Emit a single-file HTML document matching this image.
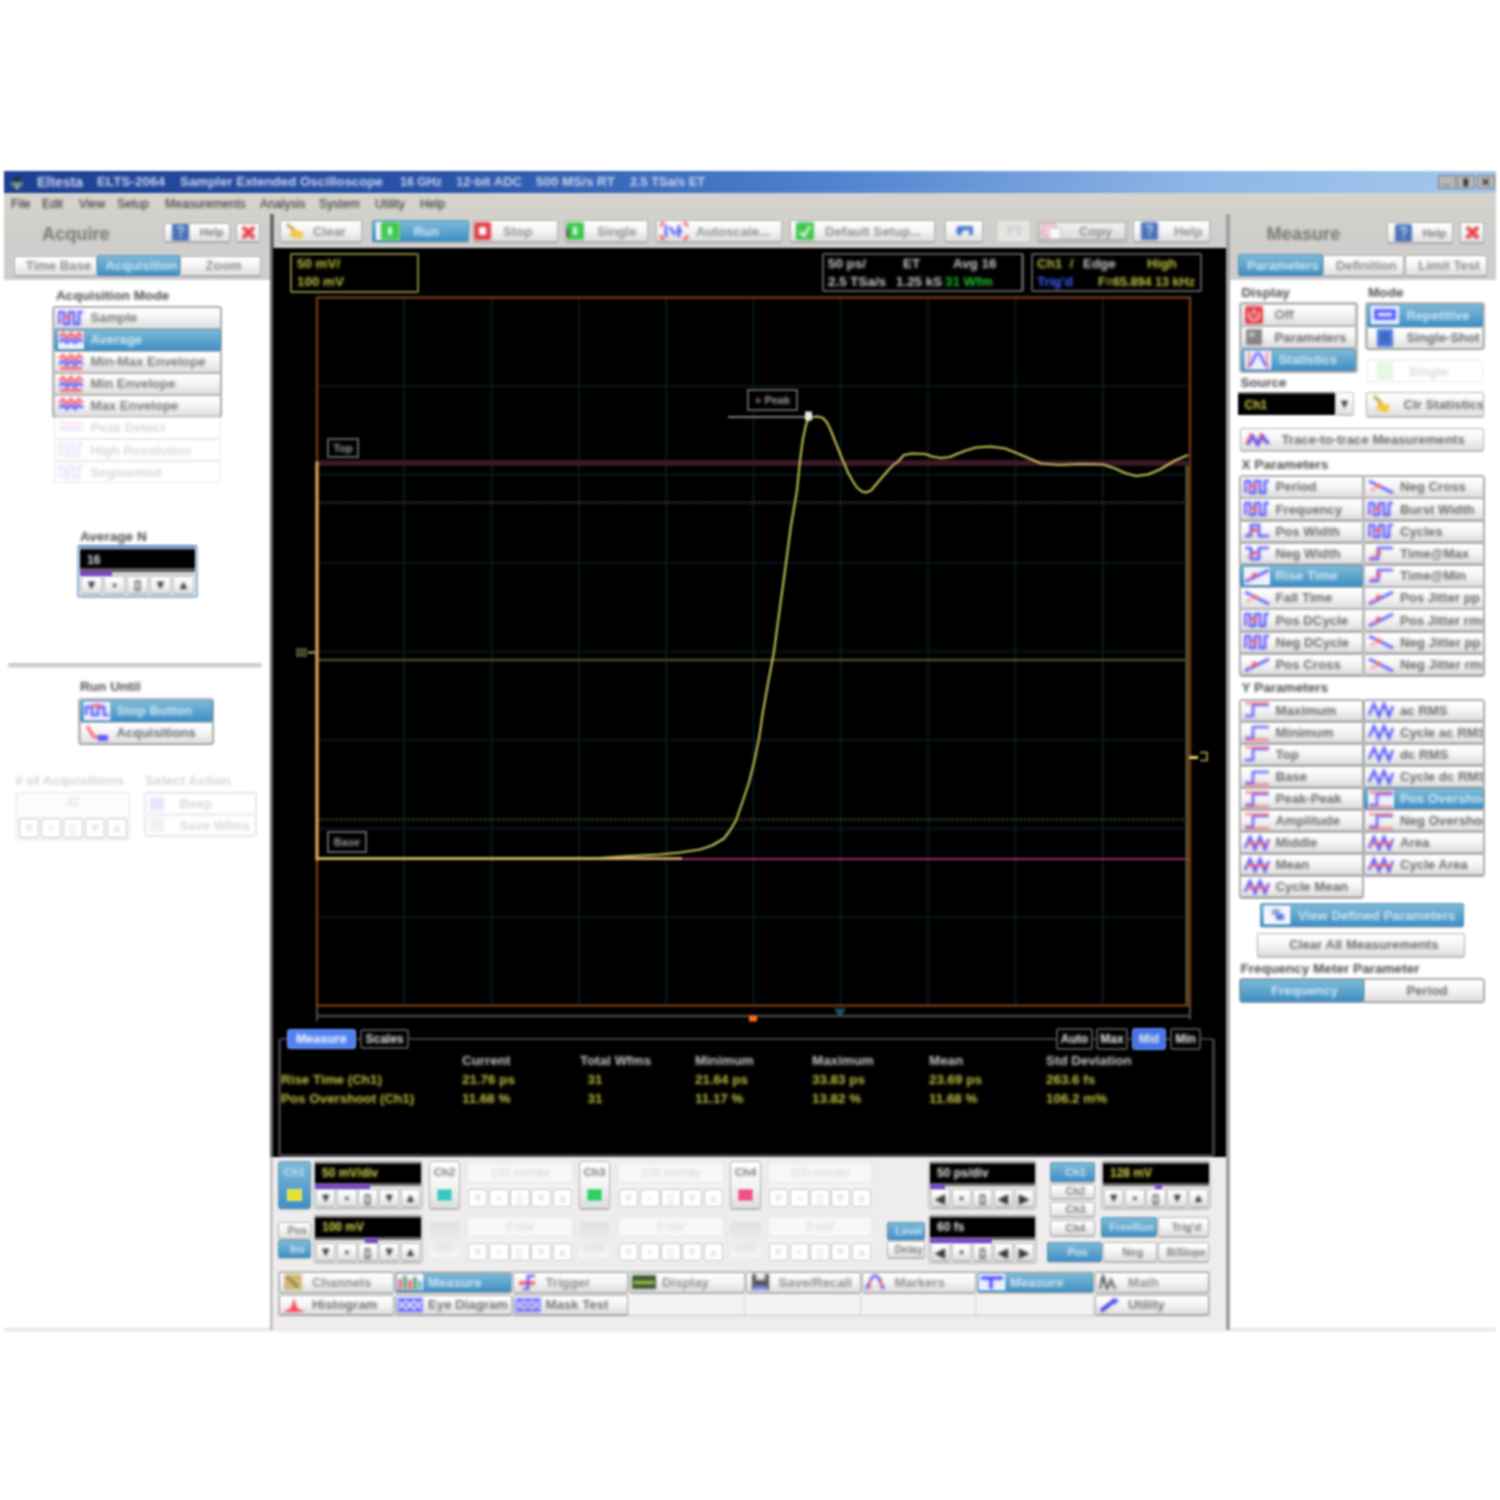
<!DOCTYPE html>
<html lang="en"><head><meta charset="utf-8"><title>Sampler Extended Oscilloscope</title>
<style>
html,body{margin:0;padding:0;background:#fff;}
body{width:1500px;height:1500px;overflow:hidden;position:relative;font-family:"Liberation Sans",sans-serif;font-size:12px;color:#555;}
#w{position:absolute;left:0;top:0;width:1500px;height:1500px;filter:blur(0.9px);}
.t,.lb,.mn,.st,.ttl,.ic,.tx{filter:blur(0.95px);}
.tx{display:inline-block;}
#w div{position:absolute;box-sizing:border-box;white-space:nowrap;}
.b{display:flex;align-items:center;border:1px solid #b4b4b4;border-radius:2px;background:linear-gradient(#ffffff 0%,#f6f6f6 45%,#dedede 100%);color:#787878;font-size:13.2px;font-weight:bold;overflow:hidden;box-shadow:0 1px 1px rgba(120,120,120,.45);}
.b .t{position:static;padding-left:6px;}
.b .ico{display:inline-flex;align-items:center;margin-left:3px;flex:none;}
.b.sel{background:linear-gradient(#7db9d6 0%,#5fa5cd 50%,#3f8ec6 100%);color:#d6ecf8;border-color:#5b97bb;}
.b.dis{background:#fff;color:#d9d9d9;border-color:#e9e9e9;box-shadow:none;}
.b.dis .ic{opacity:.12;}
.ic{opacity:.85;}
.b.sel .ico{background:#eef1fb;}
.b.tb{color:#8e8e8e;}
.b.tab{color:#8a8a8a;}
.b.dk{color:#686868;}
.b.bt{color:#8e8e8e;border-color:#a9a9a9;}
.b.bt .ico{margin-left:1px;}
.b.b2{color:#707070;}
.b.sel,.b.tb.sel,.b.tab.sel,.b.bt.sel{color:#cfe8f6;}
.b.i0 .ico{margin-left:0;}
.b.tb.dis{background:#e4e4e0;border-color:#d4d4d0;}
.b.foc{outline:1px dotted #555;outline-offset:-3px;background:linear-gradient(#f4f4f4,#d8d8d8);}
.b.hp .ico{margin-left:7px;}
.b.sp{font-size:12.5px;color:#333;padding:0;border-color:#c4c4c4;}
.b.sp .t{padding:0;}
.b.sp.dis{color:#e2e2e2;}
.lb{font-weight:bold;color:#4a4a4a;font-size:13.6px;line-height:14px;}
.lb.dis{color:#d4d4d4;}
.ttl{font-weight:bold;color:#767676;font-size:18.2px;line-height:20px;}
.mn{color:#262626;font-size:12.2px;line-height:14px;}
.blk{background:#000;}
.disp{border-top:2px solid #6e6b6e;background:#000;color:#d8d850;font-size:12px;font-weight:bold;line-height:20px;padding-left:7px;}
.grp{border:1px solid #b0b0b0;border-radius:3px;background:#ececec;}
.y{color:#c0c044;} .wt{color:#c8c8c8;} .gn{color:#22c030;} .bl{color:#4060ff;}
.st{font-size:13.4px;font-weight:bold;line-height:14px;}
svg{display:block;}
</style></head><body><div id="w">

<div class="" style="left:4px;top:171px;width:1492px;height:1160px;background:#fff;"></div>
<div class="" style="left:4px;top:192px;width:1492px;height:88px;background:linear-gradient(#d5d5cd,#d0cfcb 40%,#cfcdce);"></div>
<div class="" style="left:4px;top:171px;width:1492px;height:22px;background:linear-gradient(90deg,#1d3f93 0%,#2a54aa 30%,#4f82cf 55%,#8fb6e6 80%,#a4c8ee 100%);"></div>
<div class="" style="left:9px;top:174px;width:16px;height:16px;"><svg class="ic" width="16" height="16" viewBox="0 0 16 16"><path d="M8 1 L12 7 H4 Z" fill="#1a2a10"/><rect x="2" y="8" width="12" height="4" fill="#8a9a70"/><rect x="6" y="11" width="4" height="4" fill="#c0c8b0"/></svg></div>
<div class="lb" style="left:37px;top:175px;color:#cfd9f0;font-size:14.03px;">Eltesta</div>
<div class="lb" style="left:97px;top:175px;color:#cfd9f0;font-size:13.5px;">ELTS-2064</div>
<div class="lb" style="left:180px;top:175px;color:#cfd9f0;font-size:13.33px;">Sampler Extended Oscilloscope</div>
<div class="lb" style="left:400px;top:175px;color:#cfd9f0;font-size:12.39px;">16 GHz</div>
<div class="lb" style="left:456px;top:175px;color:#cfd9f0;font-size:13.01px;">12-bit ADC</div>
<div class="lb" style="left:536px;top:175px;color:#cfd9f0;font-size:13.41px;">500 MS/s RT</div>
<div class="lb" style="left:630px;top:175px;color:#cfd9f0;font-size:12.73px;">2.5 TSa/s ET</div>
<div class="" style="left:1437.5px;top:174.5px;width:18px;height:14.5px;background:#b6b6b6;border:1px solid #808080;color:#111;font-size:12px;font-weight:bold;line-height:8px;text-align:center;"><span class="tx">_</span></div>
<div class="" style="left:1456.5px;top:174.5px;width:18px;height:14.5px;background:#b6b6b6;border:1px solid #808080;color:#222;font-size:10px;font-weight:bold;line-height:12px;text-align:center;"><span class="tx">▮</span></div>
<div class="" style="left:1476.5px;top:174.5px;width:18px;height:14.5px;background:#b6b6b6;border:1px solid #808080;color:#222;font-size:11px;font-weight:bold;line-height:12px;text-align:center;"><span class="tx">✕</span></div>
<div class="mn" style="left:11px;top:197px;">File</div>
<div class="mn" style="left:42px;top:197px;">Edit</div>
<div class="mn" style="left:79px;top:197px;">View</div>
<div class="mn" style="left:117px;top:197px;">Setup</div>
<div class="mn" style="left:165px;top:197px;">Measurements</div>
<div class="mn" style="left:260px;top:197px;">Analysis</div>
<div class="mn" style="left:319px;top:197px;">System</div>
<div class="mn" style="left:375px;top:197px;">Utility</div>
<div class="mn" style="left:420px;top:197px;">Help</div>
<div class="" style="left:4px;top:1328px;width:1492px;height:4px;background:linear-gradient(#e2e2e2,#f4f4f4);"></div>
<div class="ttl" style="left:42px;top:224px;">Acquire</div>
<div class="b hp" style="left:164px;top:222.5px;width:66px;height:19.5px;font-size:11px;"><span class="ico"><svg class="ic" width="17" height="18" viewBox="0 0 17 18"><rect x="0" y="0" width="17" height="18" rx="1.5" fill="#2e5cae"/><path d="M6 6 Q6 3.5 8.5 3.5 T11 6 Q11 8 8.5 9.5 V11" stroke="#a8c4f0" stroke-width="2" fill="none"/><rect x="7.5" y="12.5" width="2" height="2.2" fill="#a8c4f0"/></svg></span><span class="t" style="padding-left:11px">Help</span></div>
<div class="b" style="left:236px;top:222.5px;width:23.5px;height:19.5px;"><span class="ico"><svg class="ic" width="17" height="15" viewBox="0 0 17 15"><path d="M3 2 L14 13 M14 2 L3 13" stroke="#e8202c" stroke-width="4"/></svg></span></div>
<div class="b tab" style="left:14px;top:256px;width:83px;height:19.5px;justify-content:center;"><span class="t">Time Base</span></div>
<div class="b sel tab" style="left:97px;top:255px;width:83px;height:21px;justify-content:center;"><span class="t">Acquisition</span></div>
<div class="b tab" style="left:180px;top:256px;width:81px;height:19.5px;justify-content:center;"><span class="t">Zoom</span></div>
<div class="lb" style="left:56px;top:289px;">Acquisition Mode</div>
<div class="grp" style="left:52px;top:306px;width:170px;height:112px;background:#d0d0d0;border-color:#a8a8a8;"></div>
<div class="b" style="left:53.5px;top:307px;width:167px;height:21.6px;"><span class="ico"><svg class="ic" width="26" height="18" viewBox="0 0 26 18"><path d="M1 15 V3 H6 V15 H11 V3 H16 V15 H21 V3 H25" fill="none" stroke="#3b3bff" stroke-width="2.6"/><rect x="8" y="6" width="5" height="4" fill="#ff4050"/><rect x="3" y="10" width="4" height="3" fill="#ff7080" opacity=".8"/></svg></span><span class="t" style="padding-left:7px">Sample</span></div>
<div class="b sel" style="left:53.5px;top:329.1px;width:167px;height:21.6px;"><span class="ico"><svg class="ic" width="26" height="18" viewBox="0 0 26 18"><path d="M1 6 L5 2 L9 7 L13 2 L17 7 L21 2 L25 6" fill="none" stroke="#ff3040" stroke-width="2.4"/><path d="M1 11 L5 8 L9 12 L13 8 L17 12 L21 8 L25 11" fill="none" stroke="#3b3bff" stroke-width="2.6"/></svg></span><span class="t" style="padding-left:7px">Average</span></div>
<div class="b" style="left:53.5px;top:351.1px;width:167px;height:21.6px;"><span class="ico"><svg class="ic" width="26" height="18" viewBox="0 0 26 18"><path d="M1 6 L5 2 L9 7 L13 2 L17 7 L21 2 L25 6" fill="none" stroke="#ff3040" stroke-width="2.4"/><path d="M1 11 L5 8 L9 12 L13 8 L17 12 L21 8 L25 11" fill="none" stroke="#3b3bff" stroke-width="2.6"/><rect x="2" y="14" width="22" height="2.6" fill="#ff3040"/></svg></span><span class="t" style="padding-left:7px">Min-Max Envelope</span></div>
<div class="b" style="left:53.5px;top:373.1px;width:167px;height:21.6px;"><span class="ico"><svg class="ic" width="26" height="18" viewBox="0 0 26 18"><path d="M1 6 L5 2 L9 7 L13 2 L17 7 L21 2 L25 6" fill="none" stroke="#ff3040" stroke-width="2.4"/><path d="M1 11 L5 8 L9 12 L13 8 L17 12 L21 8 L25 11" fill="none" stroke="#3b3bff" stroke-width="2.6"/><rect x="2" y="14" width="22" height="2.6" fill="#ff3040"/></svg></span><span class="t" style="padding-left:7px">Min Envelope</span></div>
<div class="b" style="left:53.5px;top:395.2px;width:167px;height:21.6px;"><span class="ico"><svg class="ic" width="26" height="18" viewBox="0 0 26 18"><path d="M1 6 L5 2 L9 7 L13 2 L17 7 L21 2 L25 6" fill="none" stroke="#ff3040" stroke-width="2.4"/><path d="M1 11 L5 8 L9 12 L13 8 L17 12 L21 8 L25 11" fill="none" stroke="#3b3bff" stroke-width="2.6"/></svg></span><span class="t" style="padding-left:7px">Max Envelope</span></div>
<div class="b dis" style="left:53.5px;top:417.2px;width:167px;height:21.6px;"><span class="ico"><svg class="ic" width="26" height="18" viewBox="0 0 26 18"><path d="M1 6 L5 2 L9 7 L13 2 L17 7 L21 2 L25 6" fill="none" stroke="#ff3040" stroke-width="2.4"/><path d="M1 11 L5 8 L9 12 L13 8 L17 12 L21 8 L25 11" fill="none" stroke="#3b3bff" stroke-width="2.6"/></svg></span><span class="t" style="padding-left:7px">Peak Detect</span></div>
<div class="b dis" style="left:53.5px;top:439.3px;width:167px;height:21.6px;"><span class="ico"><svg class="ic" width="26" height="18" viewBox="0 0 26 18"><path d="M1 15 V3 H6 V15 H11 V3 H16 V15 H21 V3 H25" fill="none" stroke="#3b3bff" stroke-width="2.6"/><rect x="8" y="6" width="5" height="4" fill="#ff4050"/><rect x="3" y="10" width="4" height="3" fill="#ff7080" opacity=".8"/></svg></span><span class="t" style="padding-left:7px">High Resolution</span></div>
<div class="b dis" style="left:53.5px;top:461.4px;width:167px;height:21.6px;"><span class="ico"><svg class="ic" width="26" height="18" viewBox="0 0 26 18"><path d="M1 15 V3 H6 V15 H11 V3 H16 V15 H21 V3 H25" fill="none" stroke="#3b3bff" stroke-width="2.6"/><rect x="8" y="6" width="5" height="4" fill="#ff4050"/><rect x="3" y="10" width="4" height="3" fill="#ff7080" opacity=".8"/></svg></span><span class="t" style="padding-left:7px">Segmented</span></div>
<div class="lb" style="left:80px;top:530px;">Average N</div>
<div class="" style="left:77px;top:545px;width:120.5px;height:53px;background:#e4e4e4;border:2.5px solid #8fb8dc;border-top-color:#4c80b0;border-radius:3px;"></div>
<div class="disp" style="left:80px;top:548px;width:115px;height:20px;color:#e8e8e8;border-top-color:#3c5c80;"><span class="tx">16</span></div>
<div class="" style="left:80px;top:568px;width:115px;height:4px;background:#5c5858;"></div>
<div class="" style="left:80px;top:571.5px;width:115px;height:4px;background:#d6d2d2;"></div>
<div class="" style="left:80px;top:570.5px;width:32px;height:5px;background:#7848c8;"></div>
<div class="b sp" style="left:80.8px;top:575.5px;width:21.4px;height:18px;justify-content:center;"><span class="t">▼</span></div>
<div class="b sp" style="left:103.8px;top:575.5px;width:21.4px;height:18px;justify-content:center;"><span class="t">▪</span></div>
<div class="b sp" style="left:126.8px;top:575.5px;width:21.4px;height:18px;justify-content:center;"><span class="t">▯</span></div>
<div class="b sp" style="left:149.8px;top:575.5px;width:21.4px;height:18px;justify-content:center;"><span class="t">▼</span></div>
<div class="b sp" style="left:172.8px;top:575.5px;width:21.4px;height:18px;justify-content:center;"><span class="t">▲</span></div>
<div class="" style="left:8px;top:663px;width:254px;height:5px;background:linear-gradient(#c4c4c4,#dcdcdc);border-radius:2px;"></div>
<div class="lb" style="left:80px;top:680px;">Run Until</div>
<div class="grp" style="left:78px;top:698px;width:136px;height:46.5px;background:#cfcfcf;border-color:#a8a8a8;"></div>
<div class="b sel" style="left:79.5px;top:699.5px;width:133px;height:22px;"><span class="ico"><svg class="ic" width="26" height="18" viewBox="0 0 26 18"><rect x="0" y="0" width="26" height="18" fill="#eef"/><path d="M2 13 V5 H8 V13 H14 V5 H20 V13 H25" fill="none" stroke="#3b3bff" stroke-width="2.6"/><rect x="8" y="2" width="10" height="3" fill="#ff5060"/></svg></span><span class="t" style="padding-left:7px">Stop Button</span></div>
<div class="b dk" style="left:79.5px;top:722px;width:133px;height:21.5px;"><span class="ico"><svg class="ic" width="26" height="18" viewBox="0 0 26 18"><path d="M3 2 L10 13 H24" fill="none" stroke="#ff3040" stroke-width="2.6"/><rect x="14" y="11" width="10" height="6" fill="#3b3bff"/></svg></span><span class="t" style="padding-left:7px">Acquisitions</span></div>
<div class="lb dis" style="left:15px;top:774px;"># of Acquisitions</div>
<div class="lb dis" style="left:145px;top:774px;">Select Action</div>
<div class="" style="left:16px;top:791.5px;width:114px;height:48.5px;border:1px solid #e4e4e4;border-radius:3px;background:#fcfcfc;"></div>
<div class="" style="left:18px;top:793px;width:110px;height:19px;color:#dcdcdc;font-size:12px;line-height:19px;text-align:center;"><span class="tx">32</span></div>
<div class="b dis sp" style="left:18.8px;top:818px;width:20.4px;height:20px;justify-content:center;"><span class="t">▼</span></div>
<div class="b dis sp" style="left:40.8px;top:818px;width:20.4px;height:20px;justify-content:center;"><span class="t">▪</span></div>
<div class="b dis sp" style="left:62.8px;top:818px;width:20.4px;height:20px;justify-content:center;"><span class="t">▯</span></div>
<div class="b dis sp" style="left:84.8px;top:818px;width:20.4px;height:20px;justify-content:center;"><span class="t">▼</span></div>
<div class="b dis sp" style="left:106.8px;top:818px;width:20.4px;height:20px;justify-content:center;"><span class="t">▲</span></div>
<div class="" style="left:144px;top:791.5px;width:113px;height:45.5px;border:1px solid #e4e4e4;border-radius:3px;background:#fcfcfc;"></div>
<div class="b dis" style="left:145.5px;top:793px;width:110px;height:21px;"><span class="ico"><svg class="ic" width="14" height="14" viewBox="0 0 14 14"><rect x="0" y="0" width="14" height="14" rx="2" fill="#3b3bff"/></svg></span><span class="t" style="padding-left:16px">Beep</span></div>
<div class="b dis" style="left:145.5px;top:815px;width:110px;height:20.5px;"><span class="ico"><svg class="ic" width="14" height="14" viewBox="0 0 14 14"><rect x="0" y="0" width="14" height="14" rx="2" fill="#888"/></svg></span><span class="t" style="padding-left:16px">Save Wfms</span></div>
<div class="" style="left:270px;top:214px;width:4px;height:943px;background:#6a686c;"></div>
<div class="" style="left:270px;top:1157px;width:3.5px;height:173px;background:linear-gradient(90deg,#b4b2b4,#dcdcdc);"></div>
<div class="b tb" style="left:280px;top:220px;width:82px;height:22px;font-size:13.2px;"><span class="ico"><svg class="ic" width="22" height="18" viewBox="0 0 22 18"><path d="M3 2 L12 10" stroke="#b07818" stroke-width="2.5"/><path d="M8 8 L20 10 L17 17 L5 14 Z" fill="#f4c020"/></svg></span><span class="t" style="padding-left:7px">Clear</span></div>
<div class="b sel tb" style="left:371.5px;top:220px;width:97.5px;height:22px;font-size:13.2px;"><span class="ico"><svg class="ic" width="24" height="18" viewBox="0 0 24 18"><rect x="5" y="0" width="19" height="18" rx="2" fill="#22c032"/><rect x="12" y="5" width="4" height="8" fill="#c8ffd0"/></svg></span><span class="t" style="padding-left:14px">Run</span></div>
<div class="b tb i0" style="left:473px;top:220px;width:85px;height:22px;font-size:13.2px;"><span class="ico"><svg class="ic" width="18" height="18" viewBox="0 0 18 18"><rect x="0" y="0" width="17" height="18" rx="2" fill="#e01c24"/><rect x="5" y="5" width="7" height="8" fill="#fff"/></svg></span><span class="t" style="padding-left:11px">Stop</span></div>
<div class="b tb i0" style="left:565px;top:220px;width:83px;height:22px;font-size:13.2px;"><span class="ico"><svg class="ic" width="20" height="18" viewBox="0 0 20 18"><rect x="0" y="0" width="18" height="18" rx="2" fill="#22c032"/><rect x="7" y="5" width="4" height="8" fill="#c8ffd0"/><rect x="0" y="7" width="3" height="8" fill="#333"/></svg></span><span class="t" style="padding-left:11px">Single</span></div>
<div class="b tb" style="left:656px;top:220px;width:126px;height:22px;font-size:13.2px;"><span class="ico"><svg class="ic" width="28" height="18" viewBox="0 0 28 18"><path d="M6 3 V15 M10 5 L15 13 M19 3 V15 M16 9 H22" stroke="#3b3bff" stroke-width="2.6" fill="none"/><path d="M1 1 h4 M1 1 v4 M27 1 h-4 M27 1 v4 M1 17 h4 M1 17 v-4 M27 17 h-4 M27 17 v-4" stroke="#ff3040" stroke-width="2.4"/></svg></span><span class="t" style="padding-left:8px">Autoscale...</span></div>
<div class="b tb" style="left:790px;top:220px;width:145px;height:22px;font-size:13.2px;"><span class="ico"><svg class="ic" width="22" height="18" viewBox="0 0 22 18"><rect x="2" y="0" width="18" height="18" rx="2" fill="#22c032"/><path d="M6 10 L10 14 L16 4" stroke="#e8ffe8" stroke-width="2.4" fill="none"/></svg></span><span class="t" style="padding-left:9px">Default Setup...</span></div>
<div class="b" style="left:945px;top:220px;width:38px;height:22px;"><span class="ico"><svg class="ic" width="30" height="18" viewBox="0 0 30 18"><path d="M10 13 V6 H22 V13" stroke="#2f62c8" stroke-width="4" fill="none"/><path d="M6 8 L11 14 L15 8" fill="#2f62c8"/></svg></span></div>
<div class="b dis tb" style="left:997px;top:220px;width:33px;height:22px;"><span class="ico"><svg class="ic" width="26" height="18" viewBox="0 0 26 18"><path d="M8 13 V6 H18 V13" stroke="#2f62c8" stroke-width="4" fill="none"/></svg></span></div>
<div class="b tb foc" style="left:1037px;top:220px;width:91px;height:22px;font-size:13.2px;"><span class="ico"><svg class="ic" width="24" height="18" viewBox="0 0 24 18"><rect x="2" y="2" width="12" height="12" fill="#f8d0d8" stroke="#e06080"/><rect x="8" y="6" width="12" height="11" fill="#fff" stroke="#b0b0b0"/></svg></span><span class="t" style="padding-left:14px">Copy</span></div>
<div class="b tb hp" style="left:1133px;top:220px;width:77px;height:22px;font-size:13.2px;"><span class="ico"><svg class="ic" width="17" height="18" viewBox="0 0 17 18"><rect x="0" y="0" width="17" height="18" rx="1.5" fill="#2e5cae"/><path d="M6 6 Q6 3.5 8.5 3.5 T11 6 Q11 8 8.5 9.5 V11" stroke="#a8c4f0" stroke-width="2" fill="none"/><rect x="7.5" y="12.5" width="2" height="2.2" fill="#a8c4f0"/></svg></span><span class="t" style="padding-left:16px">Help</span></div>
<div class="blk" style="left:273px;top:247.5px;width:953.5px;height:909.1px;"></div>
<div style="left:273px;top:247.5px;width:953.5px;height:909.1px;"><svg width="953.5" height="909.1" viewBox="0 0 953.5 909.1" style="position:absolute;left:0;top:0"><path d="M131.3 49.5 V757.5 M218.6 49.5 V757.5 M305.9 49.5 V757.5 M393.2 49.5 V757.5 M480.5 49.5 V757.5 M567.8 49.5 V757.5 M655.1 49.5 V757.5 M742.4 49.5 V757.5 M829.7 49.5 V757.5 M44 138 H917 M44 226.5 H917 M44 315 H917 M44 403.5 H917 M44 492 H917 M44 580.5 H917 M44 669 H917 " stroke="#07181a" stroke-width="2.2" fill="none"/><rect x="44" y="49.5" width="873" height="708" fill="none" stroke="#743a16" stroke-width="2.4"/><path d="M914 214.5 V756.5" stroke="#5e5630" stroke-width="3"/><path d="M44 215 H917" stroke="#3c1a28" stroke-width="5.5"/><path d="M44 611 H917" stroke="#982c6a" stroke-width="2.2"/><path d="M44 412 H913" stroke="#4e4e22" stroke-width="2.6"/><path d="M44 254.5 H913" stroke="#2e321e" stroke-width="2.6" stroke-dasharray="3 1.5"/><path d="M44 571.5 H913" stroke="#26291a" stroke-width="3.2" stroke-dasharray="3 1.5"/><path d="M44 213.5 V612.5" stroke="#dc9a52" stroke-width="3.4"/><path d="M44 610.5 H409" stroke="#dcb478" stroke-width="2.4"/><path d="M44 768 H917 M44 757.5 V773.5 M917 757.5 V771.5" stroke="#464646" stroke-width="2.3" fill="none"/><rect x="476" y="767.5" width="8" height="6" fill="#ff6a18"/><path d="M561 760.5 h12 l-6 10 z" fill="#1e5060"/><path d="M44 610.5 L287 610.5 L327 610.1 L357 608 L387 606.5 L407 604.5 L427 601.5 L439 597.5 L451 590.5 L457 582.5 L463 572.5 L470 552.5 L476 534.5 L481 514.5 L486 490.5 L490 463.5 L495 435.5 L501 403.5 L506.5 362.5 L512 322.5 L518 277.5 L524 242.5 L527 212.5 L530 190.5 L533 176.5 L536 170.5 L539 169 L545 168.5 L550 170 L554 174.5 L557 180.5 L561 190.5 L565 200.5 L569 210.5 L575 224.5 L580 233.5 L584 239.5 L589 243.5 L593 244.5 L598 242.5 L603 236.5 L609 229.5 L615 222.5 L621 216.5 L625 213.5 L631 207 L639 205.5 L652 206 L659 208.5 L668 210 L677 209 L685 205.5 L693 202.5 L703 199.5 L717 198.5 L732 200.5 L747 206.5 L768 215.5 L787 217 L807 216 L830 216.5 L842 220.5 L852 225 L863 228 L875 226.5 L887 221.5 L902 212.5 L915 207" fill="none" stroke="#c2c256" stroke-width="2.1" stroke-linejoin="round"/><path d="M455 169 H533" stroke="#7a7a7a" stroke-width="2.2"/><rect x="532" y="163.5" width="7" height="9" fill="#e8e8e8"/><rect x="23" y="400" width="11" height="9" fill="#505034"/><path d="M35 404.5 h7" stroke="#a0a060" stroke-width="2.2" fill="none"/><path d="M916 509.5 h9" stroke="#e0d060" stroke-width="3"/><path d="M927 504.5 h7 v8 h-7" stroke="#8c8440" stroke-width="2" fill="none"/></svg></div>
<div class="" style="left:290px;top:253px;width:129px;height:39.5px;border:2px solid #808040;border-radius:2px;"></div>
<div class="st y" style="left:297px;top:257px;">50 mV/</div>
<div class="st y" style="left:297px;top:275px;">100 mV</div>
<div class="" style="left:822px;top:253px;width:202px;height:39px;border:2px solid #585858;border-right-width:3px;border-radius:2px;"></div>
<div class="st wt" style="left:828px;top:257px;">50 ps/</div>
<div class="st wt" style="left:903px;top:257px;">ET</div>
<div class="st wt" style="left:953px;top:257px;">Avg 16</div>
<div class="st wt" style="left:828px;top:275px;">2.5 TSa/s</div>
<div class="st wt" style="left:896px;top:275px;">1.25 kS</div>
<div class="st gn" style="left:945px;top:275px;">31 Wfm</div>
<div class="" style="left:1031px;top:253px;width:171px;height:39px;border:2px solid #585858;border-radius:2px;"></div>
<div class="st y" style="left:1037px;top:257px;">Ch1 &nbsp;/</div>
<div class="st wt" style="left:1083px;top:257px;">Edge</div>
<div class="st y" style="left:1147px;top:257px;">High</div>
<div class="st bl" style="left:1037px;top:275px;">Trig'd</div>
<div class="st y" style="left:1098px;top:275px;font-size:12.6px;">F=65.894 13 kHz</div>
<div class="" style="left:327px;top:438px;width:32px;height:20px;border:2px solid #5e5e5e;color:#9c9c9c;font-size:11px;font-weight:bold;line-height:16px;text-align:center;background:#000;"><span class="tx">Top</span></div>
<div class="" style="left:327px;top:831px;width:40px;height:22px;border:2px solid #5e5e5e;color:#9c9c9c;font-size:11px;font-weight:bold;line-height:18px;text-align:center;background:#000;"><span class="tx">Base</span></div>
<div class="" style="left:747px;top:388.5px;width:51px;height:22px;border:2px solid #5e5e5e;color:#9c9c9c;font-size:11px;font-weight:bold;line-height:18px;text-align:center;background:#000;"><span class="tx">+ Peak</span></div>
<div class="st y" style="left:297px;top:645.5px;font-size:8px;color:#2c2c18;">C1</div>
<div class="" style="left:277.5px;top:1037.5px;width:937.5px;height:119px;border:3px solid #3f3c43;border-top-width:2px;border-radius:3px;"></div>
<div class="" style="left:286.5px;top:1029px;width:69.5px;height:19.5px;background:#4f80f0;border:1px solid #7aa0f8;border-radius:3px;color:#fff;font-weight:bold;font-size:12.5px;line-height:18px;text-align:center;"><span class="tx">Measure</span></div>
<div class="" style="left:360px;top:1029px;width:49px;height:19.5px;background:#000;border:2px solid #4c4c4c;border-radius:3px;color:#e4e4e4;font-weight:bold;font-size:12px;line-height:16px;text-align:center;"><span class="tx">Scales</span></div>
<div class="" style="left:1056px;top:1028px;width:37px;height:22px;background:#000;border:2px solid #4c4c4c;border-radius:3px;color:#eee;font-weight:bold;font-size:12px;line-height:18px;text-align:center;"><span class="tx">Auto</span></div>
<div class="" style="left:1096px;top:1028px;width:32px;height:22px;background:#000;border:2px solid #4c4c4c;border-radius:3px;color:#eee;font-weight:bold;font-size:12px;line-height:18px;text-align:center;"><span class="tx">Max</span></div>
<div class="" style="left:1132px;top:1028px;width:34px;height:22px;background:#4474e4;border:1px solid #6a94f0;border-radius:3px;color:#eee;font-weight:bold;font-size:12px;line-height:20px;text-align:center;"><span class="tx">Mid</span></div>
<div class="" style="left:1170px;top:1028px;width:31px;height:22px;background:#000;border:2px solid #4c4c4c;border-radius:3px;color:#eee;font-weight:bold;font-size:12px;line-height:18px;text-align:center;"><span class="tx">Min</span></div>
<div class="st wt" style="left:462px;top:1054px;">Current</div>
<div class="st wt" style="left:580px;top:1054px;">Total Wfms</div>
<div class="st wt" style="left:695px;top:1054px;">Minimum</div>
<div class="st wt" style="left:812px;top:1054px;">Maximum</div>
<div class="st wt" style="left:929px;top:1054px;">Mean</div>
<div class="st wt" style="left:1046px;top:1054px;">Std Deviation</div>
<div class="st y" style="left:281px;top:1073px;">Rise Time (Ch1)</div>
<div class="st y" style="left:281px;top:1091.5px;">Pos Overshoot (Ch1)</div>
<div class="st y" style="left:462px;top:1073px;">21.76 ps</div>
<div class="st y" style="left:462px;top:1091.5px;">11.68 %</div>
<div class="st y" style="left:580px;top:1073px;">&nbsp;&nbsp;31</div>
<div class="st y" style="left:580px;top:1091.5px;">&nbsp;&nbsp;31</div>
<div class="st y" style="left:695px;top:1073px;">21.64 ps</div>
<div class="st y" style="left:695px;top:1091.5px;">11.17 %</div>
<div class="st y" style="left:812px;top:1073px;">33.83 ps</div>
<div class="st y" style="left:812px;top:1091.5px;">13.82 %</div>
<div class="st y" style="left:929px;top:1073px;">23.69 ps</div>
<div class="st y" style="left:929px;top:1091.5px;">11.68 %</div>
<div class="st y" style="left:1046px;top:1073px;">263.6 fs</div>
<div class="st y" style="left:1046px;top:1091.5px;">106.2 m%</div>
<div class="" style="left:273px;top:1156.6px;width:953.5px;height:173.4px;background:#eeecec;"></div>
<div class="b sel" style="left:277.5px;top:1160.5px;width:33.5px;height:48px;display:block;border-radius:3px;"><div class="tx" style="left:0;top:4px;width:100%;text-align:center;font-size:11.5px;line-height:13px;color:#bfe0f2">Ch1</div><div style="left:8.2px;top:27px;width:15px;height:12px;background:#e4e030;border:1px solid rgba(255,255,255,.35)"></div></div>
<div class="b" style="left:429px;top:1160.5px;width:31px;height:48px;display:block;border-radius:3px;"><div class="tx" style="left:0;top:4px;width:100%;text-align:center;font-size:11.5px;line-height:13px;color:#777">Ch2</div><div style="left:7px;top:27px;width:15px;height:12px;background:#38c8c0;border:1px solid rgba(255,255,255,.35)"></div></div>
<div class="b" style="left:579px;top:1160.5px;width:31px;height:48px;display:block;border-radius:3px;"><div class="tx" style="left:0;top:4px;width:100%;text-align:center;font-size:11.5px;line-height:13px;color:#777">Ch3</div><div style="left:7px;top:27px;width:15px;height:12px;background:#30d060;border:1px solid rgba(255,255,255,.35)"></div></div>
<div class="b" style="left:730px;top:1160.5px;width:31px;height:48px;display:block;border-radius:3px;"><div class="tx" style="left:0;top:4px;width:100%;text-align:center;font-size:11.5px;line-height:13px;color:#777">Ch4</div><div style="left:7px;top:27px;width:15px;height:12px;background:#f05088;border:1px solid rgba(255,255,255,.35)"></div></div>
<div class="" style="left:313px;top:1160px;width:110px;height:50px;border:1px solid #bcbcbc;border-radius:4px;background:#e0e0e0;"></div>
<div class="disp" style="left:315px;top:1161.5px;width:106px;height:21px;color:#d8d850;line-height:19px;"><span class="tx">50 mV/div</span></div>
<div class="" style="left:315px;top:1182.5px;width:106px;height:3px;background:#6a6767;"></div>
<div class="" style="left:315px;top:1184px;width:55px;height:4.5px;background:#7848c8;"></div>
<div class="b sp" style="left:315.8px;top:1189px;width:19.6px;height:18px;justify-content:center;"><span class="t">▼</span></div>
<div class="b sp" style="left:337px;top:1189px;width:19.6px;height:18px;justify-content:center;"><span class="t">▪</span></div>
<div class="b sp" style="left:358.2px;top:1189px;width:19.6px;height:18px;justify-content:center;"><span class="t">▯</span></div>
<div class="b sp" style="left:379.4px;top:1189px;width:19.6px;height:18px;justify-content:center;"><span class="t">▼</span></div>
<div class="b sp" style="left:400.6px;top:1189px;width:19.6px;height:18px;justify-content:center;"><span class="t">▲</span></div>
<div class="" style="left:313px;top:1214px;width:110px;height:50px;border:1px solid #bcbcbc;border-radius:4px;background:#e0e0e0;"></div>
<div class="disp" style="left:315px;top:1215.5px;width:106px;height:21px;color:#d8d850;line-height:19px;"><span class="tx">100 mV</span></div>
<div class="" style="left:315px;top:1236.5px;width:106px;height:3px;background:#6a6767;"></div>
<div class="" style="left:365px;top:1238px;width:13px;height:4.5px;background:#7848c8;"></div>
<div class="b sp" style="left:315.8px;top:1243px;width:19.6px;height:18px;justify-content:center;"><span class="t">▼</span></div>
<div class="b sp" style="left:337px;top:1243px;width:19.6px;height:18px;justify-content:center;"><span class="t">▪</span></div>
<div class="b sp" style="left:358.2px;top:1243px;width:19.6px;height:18px;justify-content:center;"><span class="t">▯</span></div>
<div class="b sp" style="left:379.4px;top:1243px;width:19.6px;height:18px;justify-content:center;"><span class="t">▼</span></div>
<div class="b sp" style="left:400.6px;top:1243px;width:19.6px;height:18px;justify-content:center;"><span class="t">▲</span></div>
<div class="" style="left:465px;top:1160px;width:110px;height:50px;border:1px solid #e8e8e8;border-radius:4px;background:#f3f2f2;"></div>
<div class="" style="left:467px;top:1162.5px;width:106px;height:20.5px;background:#f8f8f8;border:1px solid #e6e6e6;color:#d6d6d6;font-size:12px;line-height:19px;text-align:center;"><span class="tx">100 mV/div</span></div>
<div class="b dis sp" style="left:467.8px;top:1189px;width:19.6px;height:18px;justify-content:center;"><span class="t">▼</span></div>
<div class="b dis sp" style="left:489px;top:1189px;width:19.6px;height:18px;justify-content:center;"><span class="t">▪</span></div>
<div class="b dis sp" style="left:510.2px;top:1189px;width:19.6px;height:18px;justify-content:center;"><span class="t">▯</span></div>
<div class="b dis sp" style="left:531.4px;top:1189px;width:19.6px;height:18px;justify-content:center;"><span class="t">▼</span></div>
<div class="b dis sp" style="left:552.6px;top:1189px;width:19.6px;height:18px;justify-content:center;"><span class="t">▲</span></div>
<div class="" style="left:465px;top:1214px;width:110px;height:50px;border:1px solid #e8e8e8;border-radius:4px;background:#f3f2f2;"></div>
<div class="" style="left:467px;top:1216.5px;width:106px;height:20.5px;background:#f8f8f8;border:1px solid #e6e6e6;color:#d6d6d6;font-size:12px;line-height:19px;text-align:center;"><span class="tx">0 mV</span></div>
<div class="b dis sp" style="left:467.8px;top:1243px;width:19.6px;height:18px;justify-content:center;"><span class="t">▼</span></div>
<div class="b dis sp" style="left:489px;top:1243px;width:19.6px;height:18px;justify-content:center;"><span class="t">▪</span></div>
<div class="b dis sp" style="left:510.2px;top:1243px;width:19.6px;height:18px;justify-content:center;"><span class="t">▯</span></div>
<div class="b dis sp" style="left:531.4px;top:1243px;width:19.6px;height:18px;justify-content:center;"><span class="t">▼</span></div>
<div class="b dis sp" style="left:552.6px;top:1243px;width:19.6px;height:18px;justify-content:center;"><span class="t">▲</span></div>
<div class="" style="left:616px;top:1160px;width:110px;height:50px;border:1px solid #e8e8e8;border-radius:4px;background:#f3f2f2;"></div>
<div class="" style="left:618px;top:1162.5px;width:106px;height:20.5px;background:#f8f8f8;border:1px solid #e6e6e6;color:#d6d6d6;font-size:12px;line-height:19px;text-align:center;"><span class="tx">100 mV/div</span></div>
<div class="b dis sp" style="left:618.8px;top:1189px;width:19.6px;height:18px;justify-content:center;"><span class="t">▼</span></div>
<div class="b dis sp" style="left:640px;top:1189px;width:19.6px;height:18px;justify-content:center;"><span class="t">▪</span></div>
<div class="b dis sp" style="left:661.2px;top:1189px;width:19.6px;height:18px;justify-content:center;"><span class="t">▯</span></div>
<div class="b dis sp" style="left:682.4px;top:1189px;width:19.6px;height:18px;justify-content:center;"><span class="t">▼</span></div>
<div class="b dis sp" style="left:703.6px;top:1189px;width:19.6px;height:18px;justify-content:center;"><span class="t">▲</span></div>
<div class="" style="left:616px;top:1214px;width:110px;height:50px;border:1px solid #e8e8e8;border-radius:4px;background:#f3f2f2;"></div>
<div class="" style="left:618px;top:1216.5px;width:106px;height:20.5px;background:#f8f8f8;border:1px solid #e6e6e6;color:#d6d6d6;font-size:12px;line-height:19px;text-align:center;"><span class="tx">0 mV</span></div>
<div class="b dis sp" style="left:618.8px;top:1243px;width:19.6px;height:18px;justify-content:center;"><span class="t">▼</span></div>
<div class="b dis sp" style="left:640px;top:1243px;width:19.6px;height:18px;justify-content:center;"><span class="t">▪</span></div>
<div class="b dis sp" style="left:661.2px;top:1243px;width:19.6px;height:18px;justify-content:center;"><span class="t">▯</span></div>
<div class="b dis sp" style="left:682.4px;top:1243px;width:19.6px;height:18px;justify-content:center;"><span class="t">▼</span></div>
<div class="b dis sp" style="left:703.6px;top:1243px;width:19.6px;height:18px;justify-content:center;"><span class="t">▲</span></div>
<div class="" style="left:766px;top:1160px;width:108px;height:50px;border:1px solid #e8e8e8;border-radius:4px;background:#f3f2f2;"></div>
<div class="" style="left:768px;top:1162.5px;width:104px;height:20.5px;background:#f8f8f8;border:1px solid #e6e6e6;color:#d6d6d6;font-size:12px;line-height:19px;text-align:center;"><span class="tx">100 mV/div</span></div>
<div class="b dis sp" style="left:768.8px;top:1189px;width:19.2px;height:18px;justify-content:center;"><span class="t">▼</span></div>
<div class="b dis sp" style="left:789.6px;top:1189px;width:19.2px;height:18px;justify-content:center;"><span class="t">▪</span></div>
<div class="b dis sp" style="left:810.4px;top:1189px;width:19.2px;height:18px;justify-content:center;"><span class="t">▯</span></div>
<div class="b dis sp" style="left:831.2px;top:1189px;width:19.2px;height:18px;justify-content:center;"><span class="t">▼</span></div>
<div class="b dis sp" style="left:852px;top:1189px;width:19.2px;height:18px;justify-content:center;"><span class="t">▲</span></div>
<div class="" style="left:766px;top:1214px;width:108px;height:50px;border:1px solid #e8e8e8;border-radius:4px;background:#f3f2f2;"></div>
<div class="" style="left:768px;top:1216.5px;width:104px;height:20.5px;background:#f8f8f8;border:1px solid #e6e6e6;color:#d6d6d6;font-size:12px;line-height:19px;text-align:center;"><span class="tx">0 mV</span></div>
<div class="b dis sp" style="left:768.8px;top:1243px;width:19.2px;height:18px;justify-content:center;"><span class="t">▼</span></div>
<div class="b dis sp" style="left:789.6px;top:1243px;width:19.2px;height:18px;justify-content:center;"><span class="t">▪</span></div>
<div class="b dis sp" style="left:810.4px;top:1243px;width:19.2px;height:18px;justify-content:center;"><span class="t">▯</span></div>
<div class="b dis sp" style="left:831.2px;top:1243px;width:19.2px;height:18px;justify-content:center;"><span class="t">▼</span></div>
<div class="b dis sp" style="left:852px;top:1243px;width:19.2px;height:18px;justify-content:center;"><span class="t">▲</span></div>
<div class="" style="left:928px;top:1160px;width:109px;height:50px;border:1px solid #bcbcbc;border-radius:4px;background:#e0e0e0;"></div>
<div class="disp" style="left:930px;top:1161.5px;width:105px;height:21px;color:#e8e8e8;line-height:19px;"><span class="tx">50 ps/div</span></div>
<div class="" style="left:930px;top:1182.5px;width:105px;height:3px;background:#6a6767;"></div>
<div class="" style="left:930px;top:1184px;width:15px;height:4.5px;background:#7848c8;"></div>
<div class="b sp" style="left:930.8px;top:1189px;width:19.4px;height:18px;justify-content:center;"><span class="t">◀</span></div>
<div class="b sp" style="left:951.8px;top:1189px;width:19.4px;height:18px;justify-content:center;"><span class="t">▪</span></div>
<div class="b sp" style="left:972.8px;top:1189px;width:19.4px;height:18px;justify-content:center;"><span class="t">▯</span></div>
<div class="b sp" style="left:993.8px;top:1189px;width:19.4px;height:18px;justify-content:center;"><span class="t">◀</span></div>
<div class="b sp" style="left:1014.8px;top:1189px;width:19.4px;height:18px;justify-content:center;"><span class="t">▶</span></div>
<div class="" style="left:928px;top:1214px;width:109px;height:50px;border:1px solid #bcbcbc;border-radius:4px;background:#e0e0e0;"></div>
<div class="disp" style="left:930px;top:1215.5px;width:105px;height:21px;color:#e8e8e8;line-height:19px;"><span class="tx">60 fs</span></div>
<div class="" style="left:930px;top:1236.5px;width:105px;height:3px;background:#6a6767;"></div>
<div class="" style="left:930px;top:1238px;width:62px;height:4.5px;background:#7848c8;"></div>
<div class="b sp" style="left:930.8px;top:1243px;width:19.4px;height:18px;justify-content:center;"><span class="t">◀</span></div>
<div class="b sp" style="left:951.8px;top:1243px;width:19.4px;height:18px;justify-content:center;"><span class="t">▪</span></div>
<div class="b sp" style="left:972.8px;top:1243px;width:19.4px;height:18px;justify-content:center;"><span class="t">▯</span></div>
<div class="b sp" style="left:993.8px;top:1243px;width:19.4px;height:18px;justify-content:center;"><span class="t">◀</span></div>
<div class="b sp" style="left:1014.8px;top:1243px;width:19.4px;height:18px;justify-content:center;"><span class="t">▶</span></div>
<div class="" style="left:1101px;top:1160px;width:110px;height:50px;border:1px solid #bcbcbc;border-radius:4px;background:#e0e0e0;"></div>
<div class="disp" style="left:1103px;top:1161.5px;width:106px;height:21px;color:#d8d850;line-height:19px;"><span class="tx">128 mV</span></div>
<div class="" style="left:1103px;top:1182.5px;width:106px;height:3px;background:#6a6767;"></div>
<div class="" style="left:1155px;top:1184px;width:7px;height:4.5px;background:#7848c8;"></div>
<div class="b sp" style="left:1103.8px;top:1189px;width:19.6px;height:18px;justify-content:center;"><span class="t">▼</span></div>
<div class="b sp" style="left:1125px;top:1189px;width:19.6px;height:18px;justify-content:center;"><span class="t">▪</span></div>
<div class="b sp" style="left:1146.2px;top:1189px;width:19.6px;height:18px;justify-content:center;"><span class="t">▯</span></div>
<div class="b sp" style="left:1167.4px;top:1189px;width:19.6px;height:18px;justify-content:center;"><span class="t">▼</span></div>
<div class="b sp" style="left:1188.6px;top:1189px;width:19.6px;height:18px;justify-content:center;"><span class="t">▲</span></div>
<div class="b np" style="left:278px;top:1221.5px;width:33px;height:17.5px;font-size:10.5px;justify-content:center;"><span class="t">Pos</span></div>
<div class="b sel np" style="left:278px;top:1239.5px;width:33px;height:18px;font-size:10.5px;justify-content:center;"><span class="t">Inv</span></div>
<div class="" style="left:429px;top:1221.5px;width:31px;height:36.5px;background:linear-gradient(#e2e2e2,#f6f6f6);border-radius:3px;"></div>
<div class="" style="left:429px;top:1241px;width:31px;height:16px;color:#d8d8d8;font-size:10px;line-height:16px;text-align:center;"><span class="tx">OFF</span></div>
<div class="" style="left:579px;top:1221.5px;width:31px;height:36.5px;background:linear-gradient(#e2e2e2,#f6f6f6);border-radius:3px;"></div>
<div class="" style="left:579px;top:1241px;width:31px;height:16px;color:#d8d8d8;font-size:10px;line-height:16px;text-align:center;"><span class="tx">OFF</span></div>
<div class="" style="left:730px;top:1221.5px;width:31px;height:36.5px;background:linear-gradient(#e2e2e2,#f6f6f6);border-radius:3px;"></div>
<div class="" style="left:730px;top:1241px;width:31px;height:16px;color:#d8d8d8;font-size:10px;line-height:16px;text-align:center;"><span class="tx">OFF</span></div>
<div class="b sel np" style="left:886.5px;top:1221.5px;width:38.5px;height:18.5px;font-size:10.5px;justify-content:center;"><span class="t">Level</span></div>
<div class="b np" style="left:886.5px;top:1240.5px;width:38.5px;height:17px;font-size:10.5px;justify-content:center;"><span class="t">Delay</span></div>
<div class="b sel np" style="left:1050px;top:1161.5px;width:45px;height:20px;font-size:11px;justify-content:center;"><span class="t">Ch1</span></div>
<div class="b np" style="left:1050px;top:1183.5px;width:45px;height:15.5px;font-size:10.5px;justify-content:center;"><span class="t">Ch2</span></div>
<div class="b np" style="left:1050px;top:1201.5px;width:45px;height:15.5px;font-size:10.5px;justify-content:center;"><span class="t">Ch3</span></div>
<div class="b np" style="left:1050px;top:1220px;width:45px;height:16px;font-size:10.5px;justify-content:center;"><span class="t">Ch4</span></div>
<div class="b sel np" style="left:1100.5px;top:1216.5px;width:56.5px;height:20px;font-size:11px;justify-content:center;"><span class="t">FreeRun</span></div>
<div class="b np" style="left:1158px;top:1216.5px;width:51px;height:20px;font-size:11px;justify-content:center;"><span class="t">Trig'd</span></div>
<div class="b sel np" style="left:1047px;top:1241.5px;width:55px;height:20px;font-size:11px;justify-content:center;"><span class="t">Pos</span></div>
<div class="b np" style="left:1103px;top:1241.5px;width:53.5px;height:20px;font-size:11px;justify-content:center;"><span class="t">Neg</span></div>
<div class="b np" style="left:1157.5px;top:1241.5px;width:51.5px;height:20px;font-size:10.5px;justify-content:center;"><span class="t">BiSlope</span></div>
<div class="" style="left:278px;top:1270.5px;width:932px;height:45.5px;background:#f1f0f0;border:1px solid #c4c4c4;border-radius:2px;"></div>
<div class="b bt" style="left:279px;top:1271.5px;width:115px;height:21.5px;font-size:13.2px;"><span class="ico"><svg class="ic" width="26" height="16" viewBox="0 0 26 16"><rect x="3" y="0" width="18" height="16" fill="#c8b060"/><path d="M6 3 L17 13" stroke="#8a6a20" stroke-width="3"/></svg></span><span class="t" style="padding-left:5px">Channels</span></div>
<div class="b sel bt" style="left:395px;top:1271.5px;width:116.5px;height:21.5px;font-size:13.2px;"><span class="ico"><svg class="ic" width="26" height="16" viewBox="0 0 26 16"><rect x="0" y="0" width="26" height="16" fill="#f4f8ff"/><path d="M3 16 V5 M8 16 V2 M13 16 V6 M18 16 V3 M23 16 V7" stroke-width="3" stroke="#d03060"/><path d="M8 16 V2 M18 16 V3" stroke-width="3" stroke="#30a040"/><path d="M23 16 V7" stroke-width="3" stroke="#30c0c0"/></svg></span><span class="t" style="padding-left:5px">Measure</span></div>
<div class="b bt" style="left:512.5px;top:1271.5px;width:115.5px;height:21.5px;font-size:13.2px;"><span class="ico"><svg class="ic" width="26" height="16" viewBox="0 0 26 16"><path d="M4 9 H20" stroke="#ff3030" stroke-width="3.4"/><path d="M8 15 H13 V2 H20" stroke="#3b3bff" stroke-width="2.6" fill="none"/></svg></span><span class="t" style="padding-left:5px">Trigger</span></div>
<div class="b bt" style="left:629px;top:1271.5px;width:115.5px;height:21.5px;font-size:13.2px;"><span class="ico"><svg class="ic" width="26" height="16" viewBox="0 0 26 16"><rect x="1" y="1" width="24" height="14" fill="#1c3c10"/><rect x="3" y="7" width="20" height="3" fill="#a0c030"/></svg></span><span class="t" style="padding-left:5px">Display</span></div>
<div class="b bt" style="left:745.5px;top:1271.5px;width:115px;height:21.5px;font-size:13.2px;"><span class="ico"><svg class="ic" width="26" height="16" viewBox="0 0 26 16"><rect x="4" y="0" width="17" height="16" fill="#3a3a40"/><rect x="8" y="0" width="9" height="6" fill="#e8e8e8"/><rect x="6" y="12" width="13" height="4" fill="#7070ff"/></svg></span><span class="t" style="padding-left:5px">Save/Recall</span></div>
<div class="b bt" style="left:861.5px;top:1271.5px;width:114.5px;height:21.5px;font-size:13.2px;"><span class="ico"><svg class="ic" width="26" height="16" viewBox="0 0 26 16"><path d="M2 15 L9 2 L13 2 L20 15" fill="none" stroke="#3b3bff" stroke-width="2.6"/><path d="M6 15 V4 M17 15 V4" stroke="#ff5070" stroke-width="2"/></svg></span><span class="t" style="padding-left:5px">Markers</span></div>
<div class="b sel bt" style="left:977px;top:1271.5px;width:117px;height:21.5px;font-size:13.2px;"><span class="ico"><svg class="ic" width="26" height="16" viewBox="0 0 26 16"><rect x="0" y="0" width="26" height="16" fill="#e8f0ff"/><path d="M2 4 H24 M12 4 V15" stroke="#3030ff" stroke-width="3.4"/></svg></span><span class="t" style="padding-left:5px">Measure</span></div>
<div class="b bt" style="left:1095px;top:1271.5px;width:113.5px;height:21.5px;font-size:13.2px;"><span class="ico"><svg class="ic" width="26" height="16" viewBox="0 0 26 16"><path d="M3 15 L6 2 L10 15 L14 6 L18 15" fill="none" stroke="#505050" stroke-width="2.4"/><path d="M4 4 l4 4 m0 -4 l-4 4" stroke="#303030" stroke-width="1.6"/></svg></span><span class="t" style="padding-left:5px">Math</span></div>
<div class="b bt b2" style="left:279px;top:1294.5px;width:115px;height:20.5px;font-size:13.2px;"><span class="ico"><svg class="ic" width="26" height="16" viewBox="0 0 26 16"><path d="M2 15 H24 L16 11 L13 1 L10 11 Z" fill="#ff2838"/></svg></span><span class="t" style="padding-left:5px">Histogram</span></div>
<div class="b bt b2" style="left:395px;top:1294.5px;width:116.5px;height:20.5px;font-size:13.2px;"><span class="ico"><svg class="ic" width="26" height="16" viewBox="0 0 26 16"><rect x="0" y="1" width="26" height="14" fill="#4848ff"/><path d="M1 4 L9 12 L17 4 L25 12 M1 12 L9 4 L17 12 L25 4" stroke="#e8e8ff" stroke-width="2" fill="none"/></svg></span><span class="t" style="padding-left:5px">Eye Diagram</span></div>
<div class="b bt b2" style="left:512.5px;top:1294.5px;width:115.5px;height:20.5px;font-size:13.2px;"><span class="ico"><svg class="ic" width="26" height="16" viewBox="0 0 26 16"><rect x="0" y="1" width="26" height="14" fill="#5858ff"/><path d="M1 4 L9 12 L17 4 L25 12 M1 12 L9 4 L17 12 L25 4" stroke="#d0d0ff" stroke-width="2" fill="none"/><path d="M9 8 l4 -3 l4 3 l-4 3 z" fill="#a0a0d0"/></svg></span><span class="t" style="padding-left:5px">Mask Test</span></div>
<div class="b bt b2" style="left:1095px;top:1294.5px;width:113.5px;height:20.5px;font-size:13.2px;"><span class="ico"><svg class="ic" width="26" height="16" viewBox="0 0 26 16"><path d="M4 14 L18 3" stroke="#2020e0" stroke-width="4"/><path d="M16 1 l6 2 l-4 5 z" fill="#3030ff"/></svg></span><span class="t" style="padding-left:5px">Utility</span></div>
<div class="" style="left:629px;top:1294.5px;width:115.5px;height:20.5px;border-right:1px solid #d0d0d0;background:#f3f3f3;"></div>
<div class="" style="left:745.5px;top:1294.5px;width:115px;height:20.5px;border-right:1px solid #d0d0d0;background:#f3f3f3;"></div>
<div class="" style="left:861.5px;top:1294.5px;width:114.5px;height:20.5px;border-right:1px solid #d0d0d0;background:#f3f3f3;"></div>
<div class="" style="left:977px;top:1294.5px;width:117px;height:20.5px;border-right:1px solid #d0d0d0;background:#f3f3f3;"></div>
<div class="" style="left:1226px;top:214px;width:4px;height:1116px;background:#a29ea2;"></div>
<div class="ttl" style="left:1266.5px;top:224px;">Measure</div>
<div class="b hp" style="left:1386.5px;top:222px;width:66.5px;height:21px;font-size:11px;"><span class="ico"><svg class="ic" width="17" height="18" viewBox="0 0 17 18"><rect x="0" y="0" width="17" height="18" rx="1.5" fill="#2e5cae"/><path d="M6 6 Q6 3.5 8.5 3.5 T11 6 Q11 8 8.5 9.5 V11" stroke="#a8c4f0" stroke-width="2" fill="none"/><rect x="7.5" y="12.5" width="2" height="2.2" fill="#a8c4f0"/></svg></span><span class="t" style="padding-left:11px">Help</span></div>
<div class="b" style="left:1460px;top:222px;width:24px;height:21px;"><span class="ico"><svg class="ic" width="17" height="15" viewBox="0 0 17 15"><path d="M3 2 L14 13 M14 2 L3 13" stroke="#e8202c" stroke-width="4"/></svg></span></div>
<div class="b sel tab" style="left:1237.5px;top:254px;width:85px;height:22px;justify-content:center;"><span class="t">Parameters</span></div>
<div class="b tab" style="left:1322.5px;top:255px;width:81.5px;height:20.5px;justify-content:center;"><span class="t">Definition</span></div>
<div class="b tab" style="left:1405px;top:255px;width:82px;height:20.5px;justify-content:center;"><span class="t">Limit Test</span></div>
<div class="lb" style="left:1241.5px;top:286px;">Display</div>
<div class="lb" style="left:1368px;top:286px;">Mode</div>
<div class="grp" style="left:1239px;top:302px;width:118.5px;height:70.5px;background:#cfcfcf;border-color:#a8a8a8;"></div>
<div class="b" style="left:1240.5px;top:303.5px;width:115.5px;height:22px;"><span class="ico"><svg class="ic" width="18" height="18" viewBox="0 0 18 18"><rect x="0" y="0" width="18" height="18" rx="2" fill="#e0202a"/><path d="M9 3 V9 M5 6 a5 5 0 1 0 8 0" stroke="#ffd0d0" stroke-width="2" fill="none"/></svg></span><span class="t" style="padding-left:12px">Off</span></div>
<div class="b dk" style="left:1240.5px;top:326px;width:115.5px;height:22px;"><span class="ico"><svg class="ic" width="18" height="18" viewBox="0 0 18 18"><rect x="1" y="1" width="16" height="16" fill="#707070"/><rect x="4" y="4" width="6" height="5" fill="#b0b0b0"/></svg></span><span class="t" style="padding-left:12px">Parameters</span></div>
<div class="b sel" style="left:1240.5px;top:348.5px;width:115.5px;height:22.5px;"><span class="ico"><svg class="ic" width="26" height="18" viewBox="0 0 26 18"><rect x="0" y="0" width="26" height="18" fill="#eef0ff"/><path d="M2 16 C8 16 9 2 13 2 S18 16 24 16" fill="none" stroke="#3b3bff" stroke-width="2.4"/><path d="M4 1 V17 M22 1 V17" stroke="#ff6070" stroke-width="1.8"/></svg></span><span class="t" style="padding-left:8px">Statistics</span></div>
<div class="grp" style="left:1365px;top:302px;width:119.5px;height:48px;background:#cfcfcf;border-color:#a8a8a8;"></div>
<div class="b sel" style="left:1366.5px;top:303.5px;width:116.5px;height:23px;"><span class="ico"><svg class="ic" width="28" height="18" viewBox="0 0 28 18"><rect x="0" y="0" width="28" height="18" fill="#dfe8ff"/><path d="M5 5 H23 V12 H5 Z" fill="none" stroke="#2020ff" stroke-width="3"/></svg></span><span class="t" style="padding-left:8px">Repetitive</span></div>
<div class="b dk" style="left:1366.5px;top:327px;width:116.5px;height:21.5px;"><span class="ico"><svg class="ic" width="28" height="18" viewBox="0 0 28 18"><rect x="6" y="0" width="16" height="18" fill="#2f62d8"/><rect x="10" y="3" width="8" height="10" fill="#2050b8"/></svg></span><span class="t" style="padding-left:8px">Single-Shot</span></div>
<div class="b dis" style="left:1366.5px;top:360px;width:116.5px;height:22px;"><span class="ico"><svg class="ic" width="28" height="18" viewBox="0 0 28 18"><rect x="6" y="0" width="16" height="18" fill="#22c032"/></svg></span><span class="t" style="padding-left:10px">Single</span></div>
<div class="lb" style="left:1240.5px;top:375.5px;">Source</div>
<div class="disp" style="left:1237.5px;top:392px;width:97.5px;height:23px;line-height:22px;"><span class="tx">Ch1</span></div>
<div class="b sp" style="left:1335.5px;top:392px;width:18px;height:23px;justify-content:center;"><span class="t">▼</span></div>
<div class="b dk" style="left:1365.5px;top:392px;width:118.5px;height:24.5px;"><span class="ico"><svg class="ic" width="24" height="20" viewBox="0 0 24 20"><path d="M4 2 L12 10" stroke="#b07818" stroke-width="2.5"/><path d="M8 9 L20 11 L17 19 L6 15 Z" fill="#f4c020"/></svg></span><span class="t" style="padding-left:10px">Clr Statistics</span></div>
<div class="b dk" style="left:1239.5px;top:427.5px;width:244.5px;height:23.5px;"><span class="ico"><svg class="ic" width="28" height="18" viewBox="0 0 28 18"><path d="M2 14 L7 4 L12 14 L17 4 L22 14" fill="none" stroke="#ff4050" stroke-width="2"/><path d="M4 15 L9 6 L14 15 L19 6 L25 14" fill="none" stroke="#3b3bff" stroke-width="2.6"/></svg></span><span class="t" style="padding-left:10px">Trace-to-trace Measurements</span></div>
<div class="lb" style="left:1241.5px;top:458px;">X Parameters</div>
<div class="grp" style="left:1238.5px;top:475px;width:246.5px;height:201.5px;background:#cfcfcf;border-color:#a8a8a8;"></div>
<div class="b dk" style="left:1239.5px;top:476.2px;width:123.5px;height:21.6px;"><span class="ico"><svg class="ic" width="26" height="18" viewBox="0 0 26 18"><path d="M1 15 V3 H6 V15 H11 V3 H16 V15 H21 V3 H25" fill="none" stroke="#3b3bff" stroke-width="2.6"/><rect x="8" y="6" width="5" height="4" fill="#ff4050"/><rect x="3" y="10" width="4" height="3" fill="#ff7080" opacity=".8"/></svg></span><span class="t" style="padding-left:6px">Period</span></div>
<div class="b dk" style="left:1239.5px;top:498.4px;width:123.5px;height:21.6px;"><span class="ico"><svg class="ic" width="26" height="18" viewBox="0 0 26 18"><path d="M1 15 V3 H6 V15 H11 V3 H16 V15 H21 V3 H25" fill="none" stroke="#3b3bff" stroke-width="2.6"/><rect x="8" y="6" width="5" height="4" fill="#ff4050"/><rect x="3" y="10" width="4" height="3" fill="#ff7080" opacity=".8"/></svg></span><span class="t" style="padding-left:6px">Frequency</span></div>
<div class="b dk" style="left:1239.5px;top:520.6px;width:123.5px;height:21.6px;"><span class="ico"><svg class="ic" width="26" height="18" viewBox="0 0 26 18"><path d="M1 14 H7 V3 H15 V14 H25" fill="none" stroke="#3b3bff" stroke-width="2.6"/><rect x="8" y="6" width="5" height="4" fill="#ff4050"/><rect x="3" y="10" width="4" height="3" fill="#ff7080" opacity=".8"/></svg></span><span class="t" style="padding-left:6px">Pos Width</span></div>
<div class="b dk" style="left:1239.5px;top:542.8px;width:123.5px;height:21.6px;"><span class="ico"><svg class="ic" width="26" height="18" viewBox="0 0 26 18"><path d="M1 3 H7 V14 H15 V3 H25" fill="none" stroke="#3b3bff" stroke-width="2.6"/><rect x="8" y="6" width="5" height="4" fill="#ff4050"/><rect x="3" y="10" width="4" height="3" fill="#ff7080" opacity=".8"/></svg></span><span class="t" style="padding-left:6px">Neg Width</span></div>
<div class="b sel dk" style="left:1239.5px;top:565px;width:123.5px;height:21.6px;"><span class="ico"><svg class="ic" width="26" height="18" viewBox="0 0 26 18"><path d="M1 15 L25 3" fill="none" stroke="#3b3bff" stroke-width="2.6"/><rect x="8" y="6" width="5" height="4" fill="#ff4050"/><rect x="3" y="10" width="4" height="3" fill="#ff7080" opacity=".8"/></svg></span><span class="t" style="padding-left:6px">Rise Time</span></div>
<div class="b dk" style="left:1239.5px;top:587.2px;width:123.5px;height:21.6px;"><span class="ico"><svg class="ic" width="26" height="18" viewBox="0 0 26 18"><path d="M1 3 L25 15" fill="none" stroke="#3b3bff" stroke-width="2.6"/><rect x="8" y="6" width="5" height="4" fill="#ff4050"/><rect x="3" y="10" width="4" height="3" fill="#ff7080" opacity=".8"/></svg></span><span class="t" style="padding-left:6px">Fall Time</span></div>
<div class="b dk" style="left:1239.5px;top:609.4px;width:123.5px;height:21.6px;"><span class="ico"><svg class="ic" width="26" height="18" viewBox="0 0 26 18"><path d="M1 15 V3 H6 V15 H11 V3 H16 V15 H21 V3 H25" fill="none" stroke="#3b3bff" stroke-width="2.6"/><rect x="8" y="6" width="5" height="4" fill="#ff4050"/><rect x="3" y="10" width="4" height="3" fill="#ff7080" opacity=".8"/></svg></span><span class="t" style="padding-left:6px">Pos DCycle</span></div>
<div class="b dk" style="left:1239.5px;top:631.6px;width:123.5px;height:21.6px;"><span class="ico"><svg class="ic" width="26" height="18" viewBox="0 0 26 18"><path d="M1 15 V3 H6 V15 H11 V3 H16 V15 H21 V3 H25" fill="none" stroke="#3b3bff" stroke-width="2.6"/><rect x="8" y="6" width="5" height="4" fill="#ff4050"/><rect x="3" y="10" width="4" height="3" fill="#ff7080" opacity=".8"/></svg></span><span class="t" style="padding-left:6px">Neg DCycle</span></div>
<div class="b dk" style="left:1239.5px;top:653.8px;width:123.5px;height:21.6px;"><span class="ico"><svg class="ic" width="26" height="18" viewBox="0 0 26 18"><path d="M1 15 L25 3" fill="none" stroke="#3b3bff" stroke-width="2.6"/><rect x="8" y="6" width="5" height="4" fill="#ff4050"/><rect x="3" y="10" width="4" height="3" fill="#ff7080" opacity=".8"/></svg></span><span class="t" style="padding-left:6px">Pos Cross</span></div>
<div class="b dk" style="left:1364px;top:476.2px;width:120px;height:21.6px;"><span class="ico"><svg class="ic" width="26" height="18" viewBox="0 0 26 18"><path d="M1 3 L25 15" fill="none" stroke="#3b3bff" stroke-width="2.6"/><rect x="8" y="6" width="5" height="4" fill="#ff4050"/><rect x="3" y="10" width="4" height="3" fill="#ff7080" opacity=".8"/></svg></span><span class="t" style="padding-left:6px">Neg Cross</span></div>
<div class="b dk" style="left:1364px;top:498.4px;width:120px;height:21.6px;"><span class="ico"><svg class="ic" width="26" height="18" viewBox="0 0 26 18"><path d="M1 15 V3 H6 V15 H11 V3 H16 V15 H21 V3 H25" fill="none" stroke="#3b3bff" stroke-width="2.6"/><rect x="8" y="6" width="5" height="4" fill="#ff4050"/><rect x="3" y="10" width="4" height="3" fill="#ff7080" opacity=".8"/></svg></span><span class="t" style="padding-left:6px">Burst Width</span></div>
<div class="b dk" style="left:1364px;top:520.6px;width:120px;height:21.6px;"><span class="ico"><svg class="ic" width="26" height="18" viewBox="0 0 26 18"><path d="M1 15 V3 H6 V15 H11 V3 H16 V15 H21 V3 H25" fill="none" stroke="#3b3bff" stroke-width="2.6"/><rect x="8" y="6" width="5" height="4" fill="#ff4050"/><rect x="3" y="10" width="4" height="3" fill="#ff7080" opacity=".8"/></svg></span><span class="t" style="padding-left:6px">Cycles</span></div>
<div class="b dk" style="left:1364px;top:542.8px;width:120px;height:21.6px;"><span class="ico"><svg class="ic" width="26" height="18" viewBox="0 0 26 18"><path d="M1 14 H10 V3 H25" fill="none" stroke="#3b3bff" stroke-width="2.6"/><rect x="8" y="6" width="5" height="4" fill="#ff4050"/><rect x="3" y="10" width="4" height="3" fill="#ff7080" opacity=".8"/></svg></span><span class="t" style="padding-left:6px">Time@Max</span></div>
<div class="b dk" style="left:1364px;top:565px;width:120px;height:21.6px;"><span class="ico"><svg class="ic" width="26" height="18" viewBox="0 0 26 18"><path d="M1 14 H10 V3 H25" fill="none" stroke="#3b3bff" stroke-width="2.6"/><rect x="8" y="6" width="5" height="4" fill="#ff4050"/><rect x="3" y="10" width="4" height="3" fill="#ff7080" opacity=".8"/></svg></span><span class="t" style="padding-left:6px">Time@Min</span></div>
<div class="b dk" style="left:1364px;top:587.2px;width:120px;height:21.6px;"><span class="ico"><svg class="ic" width="26" height="18" viewBox="0 0 26 18"><path d="M1 15 L25 3" fill="none" stroke="#3b3bff" stroke-width="2.6"/><rect x="8" y="6" width="5" height="4" fill="#ff4050"/><rect x="3" y="10" width="4" height="3" fill="#ff7080" opacity=".8"/></svg></span><span class="t" style="padding-left:6px">Pos Jitter pp</span></div>
<div class="b dk" style="left:1364px;top:609.4px;width:120px;height:21.6px;"><span class="ico"><svg class="ic" width="26" height="18" viewBox="0 0 26 18"><path d="M1 15 L25 3" fill="none" stroke="#3b3bff" stroke-width="2.6"/><rect x="8" y="6" width="5" height="4" fill="#ff4050"/><rect x="3" y="10" width="4" height="3" fill="#ff7080" opacity=".8"/></svg></span><span class="t" style="padding-left:6px">Pos Jitter rms</span></div>
<div class="b dk" style="left:1364px;top:631.6px;width:120px;height:21.6px;"><span class="ico"><svg class="ic" width="26" height="18" viewBox="0 0 26 18"><path d="M1 3 L25 15" fill="none" stroke="#3b3bff" stroke-width="2.6"/><rect x="8" y="6" width="5" height="4" fill="#ff4050"/><rect x="3" y="10" width="4" height="3" fill="#ff7080" opacity=".8"/></svg></span><span class="t" style="padding-left:6px">Neg Jitter pp</span></div>
<div class="b dk" style="left:1364px;top:653.8px;width:120px;height:21.6px;"><span class="ico"><svg class="ic" width="26" height="18" viewBox="0 0 26 18"><path d="M1 3 L25 15" fill="none" stroke="#3b3bff" stroke-width="2.6"/><rect x="8" y="6" width="5" height="4" fill="#ff4050"/><rect x="3" y="10" width="4" height="3" fill="#ff7080" opacity=".8"/></svg></span><span class="t" style="padding-left:6px">Neg Jitter rms</span></div>
<div class="lb" style="left:1241.5px;top:681px;">Y Parameters</div>
<div class="grp" style="left:1238.5px;top:698.5px;width:125.5px;height:200px;background:#cfcfcf;border-color:#a8a8a8;"></div>
<div class="grp" style="left:1363px;top:698.5px;width:122px;height:178px;background:#cfcfcf;border-color:#a8a8a8;"></div>
<div class="b dk" style="left:1239.5px;top:699.7px;width:123.5px;height:21.4px;"><span class="ico"><svg class="ic" width="26" height="18" viewBox="0 0 26 18"><path d="M1 15 H9 V4 H25" fill="none" stroke="#4a4aff" stroke-width="2.6"/><rect x="1" y="1" width="24" height="2.4" fill="#ff5060" opacity=".85"/></svg></span><span class="t" style="padding-left:6px">Maximum</span></div>
<div class="b dk" style="left:1239.5px;top:721.8px;width:123.5px;height:21.4px;"><span class="ico"><svg class="ic" width="26" height="18" viewBox="0 0 26 18"><path d="M1 15 H9 V4 H25" fill="none" stroke="#4a4aff" stroke-width="2.6"/><rect x="1" y="15.5" width="24" height="2.4" fill="#ff5060" opacity=".85"/></svg></span><span class="t" style="padding-left:6px">Minimum</span></div>
<div class="b dk" style="left:1239.5px;top:743.8px;width:123.5px;height:21.4px;"><span class="ico"><svg class="ic" width="26" height="18" viewBox="0 0 26 18"><path d="M1 15 H9 V4 H25" fill="none" stroke="#4a4aff" stroke-width="2.6"/><rect x="1" y="1" width="24" height="2.4" fill="#ff5060" opacity=".85"/></svg></span><span class="t" style="padding-left:6px">Top</span></div>
<div class="b dk" style="left:1239.5px;top:765.9px;width:123.5px;height:21.4px;"><span class="ico"><svg class="ic" width="26" height="18" viewBox="0 0 26 18"><path d="M1 15 H9 V4 H25" fill="none" stroke="#4a4aff" stroke-width="2.6"/><rect x="1" y="15.5" width="24" height="2.4" fill="#ff5060" opacity=".85"/></svg></span><span class="t" style="padding-left:6px">Base</span></div>
<div class="b dk" style="left:1239.5px;top:787.9px;width:123.5px;height:21.4px;"><span class="ico"><svg class="ic" width="26" height="18" viewBox="0 0 26 18"><path d="M1 15 H9 V4 H25" fill="none" stroke="#4a4aff" stroke-width="2.6"/><rect x="1" y="1" width="24" height="2.4" fill="#ff5060" opacity=".85"/><rect x="1" y="15.5" width="24" height="2.4" fill="#ff5060" opacity=".85"/></svg></span><span class="t" style="padding-left:6px">Peak-Peak</span></div>
<div class="b dk" style="left:1239.5px;top:810px;width:123.5px;height:21.4px;"><span class="ico"><svg class="ic" width="26" height="18" viewBox="0 0 26 18"><path d="M1 15 H9 V4 H25" fill="none" stroke="#4a4aff" stroke-width="2.6"/><rect x="1" y="1" width="24" height="2.4" fill="#ff5060" opacity=".85"/><rect x="1" y="15.5" width="24" height="2.4" fill="#ff5060" opacity=".85"/></svg></span><span class="t" style="padding-left:6px">Amplitude</span></div>
<div class="b dk" style="left:1239.5px;top:832px;width:123.5px;height:21.4px;"><span class="ico"><svg class="ic" width="26" height="18" viewBox="0 0 26 18"><path d="M1 14 L6 3 L11 15 L16 3 L21 15 L25 5" fill="none" stroke="#3b3bff" stroke-width="2.6"/><rect x="2" y="8" width="22" height="3" fill="#ff4050" opacity=".8"/></svg></span><span class="t" style="padding-left:6px">Middle</span></div>
<div class="b dk" style="left:1239.5px;top:854.1px;width:123.5px;height:21.4px;"><span class="ico"><svg class="ic" width="26" height="18" viewBox="0 0 26 18"><path d="M1 14 L6 3 L11 15 L16 3 L21 15 L25 5" fill="none" stroke="#3b3bff" stroke-width="2.6"/><rect x="2" y="8" width="22" height="3" fill="#ff4050" opacity=".8"/></svg></span><span class="t" style="padding-left:6px">Mean</span></div>
<div class="b dk" style="left:1239.5px;top:876.1px;width:123.5px;height:21.4px;"><span class="ico"><svg class="ic" width="26" height="18" viewBox="0 0 26 18"><path d="M1 14 L6 3 L11 15 L16 3 L21 15 L25 5" fill="none" stroke="#3b3bff" stroke-width="2.6"/><rect x="2" y="8" width="22" height="3" fill="#ff4050" opacity=".8"/></svg></span><span class="t" style="padding-left:6px">Cycle Mean</span></div>
<div class="b dk" style="left:1364px;top:699.7px;width:120px;height:21.4px;"><span class="ico"><svg class="ic" width="26" height="18" viewBox="0 0 26 18"><path d="M1 14 L6 3 L11 15 L16 3 L21 15 L25 5" fill="none" stroke="#3b3bff" stroke-width="2.6"/></svg></span><span class="t" style="padding-left:6px">ac RMS</span></div>
<div class="b dk" style="left:1364px;top:721.8px;width:120px;height:21.4px;"><span class="ico"><svg class="ic" width="26" height="18" viewBox="0 0 26 18"><path d="M1 14 L6 3 L11 15 L16 3 L21 15 L25 5" fill="none" stroke="#3b3bff" stroke-width="2.6"/></svg></span><span class="t" style="padding-left:6px">Cycle ac RMS</span></div>
<div class="b dk" style="left:1364px;top:743.8px;width:120px;height:21.4px;"><span class="ico"><svg class="ic" width="26" height="18" viewBox="0 0 26 18"><path d="M1 14 L6 3 L11 15 L16 3 L21 15 L25 5" fill="none" stroke="#3b3bff" stroke-width="2.6"/></svg></span><span class="t" style="padding-left:6px">dc RMS</span></div>
<div class="b dk" style="left:1364px;top:765.9px;width:120px;height:21.4px;"><span class="ico"><svg class="ic" width="26" height="18" viewBox="0 0 26 18"><path d="M1 14 L6 3 L11 15 L16 3 L21 15 L25 5" fill="none" stroke="#3b3bff" stroke-width="2.6"/></svg></span><span class="t" style="padding-left:6px">Cycle dc RMS</span></div>
<div class="b sel dk" style="left:1364px;top:787.9px;width:120px;height:21.4px;"><span class="ico"><svg class="ic" width="26" height="18" viewBox="0 0 26 18"><path d="M1 15 H9 V4 H25" fill="none" stroke="#4a4aff" stroke-width="2.6"/><rect x="1" y="1" width="24" height="2.4" fill="#ff5060" opacity=".85"/><rect x="1" y="15.5" width="24" height="2.4" fill="#ff5060" opacity=".85"/></svg></span><span class="t" style="padding-left:6px">Pos Overshoot</span></div>
<div class="b dk" style="left:1364px;top:810px;width:120px;height:21.4px;"><span class="ico"><svg class="ic" width="26" height="18" viewBox="0 0 26 18"><path d="M1 15 H9 V4 H25" fill="none" stroke="#4a4aff" stroke-width="2.6"/><rect x="1" y="1" width="24" height="2.4" fill="#ff5060" opacity=".85"/><rect x="1" y="15.5" width="24" height="2.4" fill="#ff5060" opacity=".85"/></svg></span><span class="t" style="padding-left:6px">Neg Overshoot</span></div>
<div class="b dk" style="left:1364px;top:832px;width:120px;height:21.4px;"><span class="ico"><svg class="ic" width="26" height="18" viewBox="0 0 26 18"><path d="M1 14 L6 3 L11 15 L16 3 L21 15 L25 5" fill="none" stroke="#3b3bff" stroke-width="2.6"/><rect x="2" y="8" width="22" height="3" fill="#ff4050" opacity=".8"/></svg></span><span class="t" style="padding-left:6px">Area</span></div>
<div class="b dk" style="left:1364px;top:854.1px;width:120px;height:21.4px;"><span class="ico"><svg class="ic" width="26" height="18" viewBox="0 0 26 18"><path d="M1 14 L6 3 L11 15 L16 3 L21 15 L25 5" fill="none" stroke="#3b3bff" stroke-width="2.6"/><rect x="2" y="8" width="22" height="3" fill="#ff4050" opacity=".8"/></svg></span><span class="t" style="padding-left:6px">Cycle Area</span></div>
<div class="b sel" style="left:1260px;top:903px;width:203.5px;height:24px;"><span class="ico"><svg class="ic" width="26" height="18" viewBox="0 0 26 18"><rect x="0" y="0" width="26" height="18" fill="#f4f8ff"/><rect x="8" y="3" width="8" height="6" fill="#8098c0"/><rect x="12" y="8" width="8" height="6" fill="#4060e0"/></svg></span><span class="t" style="padding-left:8px">View Defined Parameters</span></div>
<div class="b dk" style="left:1257px;top:933px;width:207.5px;height:23.5px;justify-content:center;"><span class="t">Clear All Measurements</span></div>
<div class="lb" style="left:1240.5px;top:961.5px;">Frequency Meter Parameter</div>
<div class="grp" style="left:1238.5px;top:977.5px;width:246.5px;height:25.5px;background:#cfcfcf;border-color:#a8a8a8;"></div>
<div class="b sel" style="left:1239.5px;top:978.5px;width:124px;height:23.5px;justify-content:center;"><span class="t">Frequency</span></div>
<div class="b dk" style="left:1364px;top:978.5px;width:120px;height:23.5px;justify-content:center;"><span class="t">Period</span></div>
</div></body></html>
